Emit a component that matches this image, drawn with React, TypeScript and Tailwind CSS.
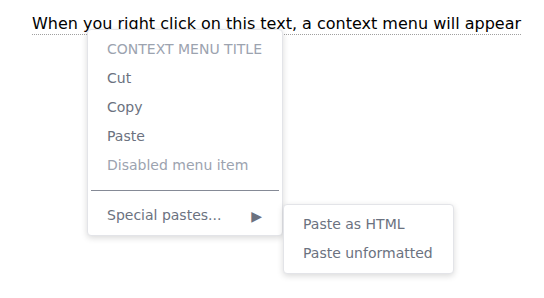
import React from 'react';

// ─── Data ─────────────────────────────────────────────────────────────────────
const items: { label: string; kind: 'title' | 'item' | 'disabled' }[] = [
    { label: 'CONTEXT MENU TITLE', kind: 'title' },
    { label: 'Cut', kind: 'item' },
    { label: 'Copy', kind: 'item' },
    { label: 'Paste', kind: 'item' },
    { label: 'Disabled menu item', kind: 'disabled' },
];

const subItems = ['Paste as HTML', 'Paste unformatted'];

// ─── Component ────────────────────────────────────────────────────────────────
export default function App() {
    return (
        <div className="relative w-[544px] h-[298px] bg-white font-['DejaVu_Sans',sans-serif] overflow-hidden">
            <div className="pt-[12px] pl-[32px]">
                <span className="inline-block text-[16px] leading-[20px] text-black border-b border-dotted border-[#a0a0a0]">
                    When you right click on this text, a context menu will appear
                </span>
            </div>

            {/* ── Context menu ─────────────────────────────────────────── */}
            <div className="absolute left-[87px] top-[29px] w-[196px] py-[5px] bg-white border border-[#e3e4e8] rounded-[4px] shadow-[0_2px_6px_rgba(0,0,0,0.15)]">
                {items.map((item) => (
                    <div
                        key={item.label}
                        className={
                            item.kind === 'item'
                                ? 'h-[29px] flex items-center px-[19px] text-[14px] text-[#6b7280]'
                                : 'h-[29px] flex items-center px-[19px] text-[14px] text-[#9ca3af]'
                        }
                    >
                        {item.label}
                    </div>
                ))}
                <div className="mx-[3px] mt-[10px] mb-[10px] h-px bg-[#858a96]" />
                <div className="h-[29px] flex items-center justify-between pl-[19px] pr-[20px] text-[14px] text-[#6b7280]">
                    <span>Special pastes...</span>
                    <span className="text-[14px] leading-none text-[#6b7280]">▶</span>
                </div>
            </div>

            {/* ── Submenu ──────────────────────────────────────────────── */}
            <div className="absolute left-[283px] top-[204px] w-[171px] py-[5px] bg-white border border-[#e3e4e8] rounded-[4px] shadow-[0_2px_6px_rgba(0,0,0,0.15)]">
                {subItems.map((label) => (
                    <div key={label} className="h-[29px] flex items-center px-[19px] text-[14px] text-[#6b7280]">
                        {label}
                    </div>
                ))}
            </div>
        </div>
    );
}
